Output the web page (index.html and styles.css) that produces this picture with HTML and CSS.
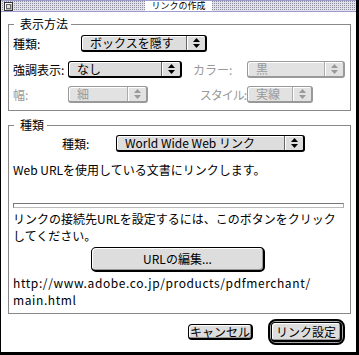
FILE: index.html
```html
<!DOCTYPE html>
<html lang="ja">

<head>
  <meta charset="UTF-8">
  <title>リンクの作成</title>
  <link rel="stylesheet" href="styles.css">
</head>

<body>
  <div class="window">
    <div class="titlebar">
      <span class="closebox"><span></span></span>
      <span class="title">リンクの作成</span>
    </div>

    <div class="content">
      <div class="group">
        <div class="group-title"><span>表示方法</span></div>
        <div class="group-body body-display">
          <div class="row">
            <span class="label label-kind">種類:</span>
            <div class="popup w-box">
              <span class="popup-text">ボックスを隠す</span>
              <span class="popup-arrows"><svg width="7" height="10" viewBox="0 0 7 10"><path d="M0 4 3.5 0 7 4Z M0 6 3.5 10 7 6Z" /></svg></span>
            </div>
          </div>

          <div class="opts">
            <span class="label">強調表示:</span>
            <div class="popup w-hilite">
              <span class="popup-text">なし</span>
              <span class="popup-arrows"><svg width="7" height="10" viewBox="0 0 7 10"><path d="M0 4 3.5 0 7 4Z M0 6 3.5 10 7 6Z" /></svg></span>
            </div>
            <span class="label off label-color">カラー:</span>
            <div class="popup off w-color">
              <span class="popup-text">黒</span>
              <span class="popup-arrows"><svg width="7" height="10" viewBox="0 0 7 10"><path d="M0 4 3.5 0 7 4Z M0 6 3.5 10 7 6Z" /></svg></span>
            </div>

            <span class="label off">幅:</span>
            <div class="popup off w-width">
              <span class="popup-text">細</span>
              <span class="popup-arrows"><svg width="7" height="10" viewBox="0 0 7 10"><path d="M0 4 3.5 0 7 4Z M0 6 3.5 10 7 6Z" /></svg></span>
            </div>
            <span class="label off label-style">スタイル:</span>
            <div class="popup off w-style">
              <span class="popup-text">実線</span>
              <span class="popup-arrows"><svg width="7" height="10" viewBox="0 0 7 10"><path d="M0 4 3.5 0 7 4Z M0 6 3.5 10 7 6Z" /></svg></span>
            </div>
          </div>
        </div>
      </div>

      <div class="group group-link">
        <div class="group-title"><span>種類</span></div>
        <div class="group-body body-link">
          <div class="row">
            <span class="label label-type">種類:</span>
            <div class="popup w-type">
              <span class="popup-text">World Wide Web リンク</span>
              <span class="popup-arrows"><svg width="7" height="10" viewBox="0 0 7 10"><path d="M0 4 3.5 0 7 4Z M0 6 3.5 10 7 6Z" /></svg></span>
            </div>
          </div>
          <p class="desc">Web URLを使用している文書にリンクします。</p>
          <div class="bar"></div>
          <p class="note">リンクの接続先URLを設定するには、このボタンをクリック<br>してください。</p>
          <button class="btn btn-url">URLの編集...</button>
          <p class="url">http://www.adobe.co.jp/products/pdfmerchant/<br>main.html</p>
        </div>
      </div>

      <div class="buttons">
        <button class="btn btn-cancel">キャンセル</button>
        <div class="default-ring">
          <button class="btn btn-ok">リンク設定</button>
        </div>
      </div>
    </div>
  </div>
</body>

</html>
```

FILE: styles.css
```css
* {
  box-sizing: border-box;
}

body {
  margin: 0;
  background: #fff;
  font-family: "Noto Sans CJK JP", "Noto Sans", sans-serif;
  font-size: 12px;
  line-height: 16px;
  color: #000;
}

.window {
  width: 359px;
  height: 355px;
  border-left: 1px solid #000;
  border-right: 3px solid #000;
  border-bottom: 3px solid #000;
  background: #fff;
  display: flex;
  flex-direction: column;
}

.titlebar {
  height: 12px;
  display: grid;
  grid-template-columns: 1fr auto 1fr;
  align-items: center;
  padding: 0 3px;
  background: conic-gradient(#8c8c9c 0 25%, #e2e2ea 0) 0 0 / 2px 2px;
  border-top: 1px solid #9c9cce;
  border-bottom: 1px solid #9c9cce;
}

.closebox {
  width: 9px;
  height: 9px;
  border: 1px solid #333;
  background: #bbb;
  display: flex;
  align-items: center;
  justify-content: center;
  box-shadow: inset 1px 1px 0 #fff;
}

.closebox span {
  width: 5px;
  height: 5px;
  border: 1px solid #666;
  background: #ddd;
}

.title {
  background: #fff;
  padding: 0 6px;
  font-size: 9px;
  line-height: 10px;
  white-space: nowrap;
}

.content {
  padding: 5px 0 0 7px;
}

.group {
  width: 343px;
}

.group-link {
  margin-top: 7px;
}

.group-title {
  display: flex;
  height: 14px;
  line-height: 14px;
}

.group-title::before,
.group-title::after {
  content: "";
  margin-top: 7px;
  border-top: 1px solid #888;
}

.group-title::before {
  width: 5px;
  border-left: 1px solid #888;
}

.group-title::after {
  flex: 1;
  border-right: 1px solid #888;
}

.group-title span {
  padding: 0 3px 0 6px;
}

.group-body {
  border: 1px solid #888;
  border-top: none;
}

.body-display {
  padding: 4px 0 7px 4px;
}

.body-link {
  padding: 3px 7px 5px 4px;
}

.row {
  display: flex;
  align-items: center;
}

.label {
  white-space: nowrap;
}

.off {
  color: #999;
}

.label-kind {
  width: 68px;
}

.label-type {
  width: 54px;
  margin-left: 49px;
}

.opts {
  display: grid;
  grid-template-columns: 55px 114px 65px auto;
  row-gap: 8px;
  align-items: center;
  margin-top: 9px;
}

.opts .popup {
  justify-self: start;
}

.label-color {
  margin-left: 11px;
}

.label-style {
  justify-self: end;
  margin-right: 1px;
  letter-spacing: -1px;
}

.popup {
  height: 17px;
  display: flex;
  border: 1px solid #000;
  border-right-width: 2px;
  border-bottom-width: 2px;
  border-radius: 3px;
  background: #ddd;
  box-shadow: inset 1px 1px 0 #fff;
}

.popup-text {
  flex: 1;
  padding-left: 8px;
  line-height: 14px;
  white-space: nowrap;
}

.popup-arrows {
  width: 19px;
  border-left: 1px solid #666;
  box-shadow: inset 1px 0 0 #fff;
  display: flex;
  align-items: center;
  justify-content: center;
}

.popup-arrows svg {
  fill: #000;
}

.popup.off {
  border-color: #999;
  background: #e2e2e2;
  color: #999;
}

.popup.off .popup-arrows {
  border-left-color: #aaa;
}

.popup.off .popup-arrows svg {
  fill: #999;
}

.w-box { width: 126px; }
.w-hilite { width: 114px; }
.w-color { width: 98px; }
.w-width { width: 80px; }
.w-style { width: 66px; }
.w-type { width: 189px; }

p {
  margin: 0;
}

.desc {
  margin-top: 10px;
}

.bar {
  margin-top: 25px;
  height: 5px;
  width: 331px;
  border: 1px solid #777;
  border-right-color: #aaa;
  border-bottom-color: #bbb;
}

.note {
  margin-top: 2px;
  line-height: 17px;
  white-space: nowrap;
}

.url {
  margin-top: 2px;
  line-height: 17px;
  letter-spacing: 0.6px;
}

.btn {
  display: flex;
  align-items: center;
  justify-content: center;
  padding: 0;
  font: inherit;
  color: #000;
  border: 1px solid #000;
  border-right-width: 2px;
  border-bottom-width: 2px;
  border-radius: 4px;
  background: #ddd;
  box-shadow: inset 1px 1px 0 #fff, inset -1px -1px 0 #999;
  white-space: nowrap;
}

.btn-url {
  width: 174px;
  height: 25px;
  margin: 3px auto 0;
  border-radius: 5px;
}

.buttons {
  width: 343px;
  margin-top: 5px;
  padding-right: 6px;
  display: flex;
  justify-content: flex-end;
  align-items: center;
  gap: 15px;
}

.btn-cancel {
  width: 65px;
  height: 16px;
  line-height: 14px;
}

.default-ring {
  border: 2px solid #000;
  border-radius: 8px;
  padding: 1px;
  background: #aaa;
}

.btn-ok {
  width: 71px;
  height: 20px;
}
```
